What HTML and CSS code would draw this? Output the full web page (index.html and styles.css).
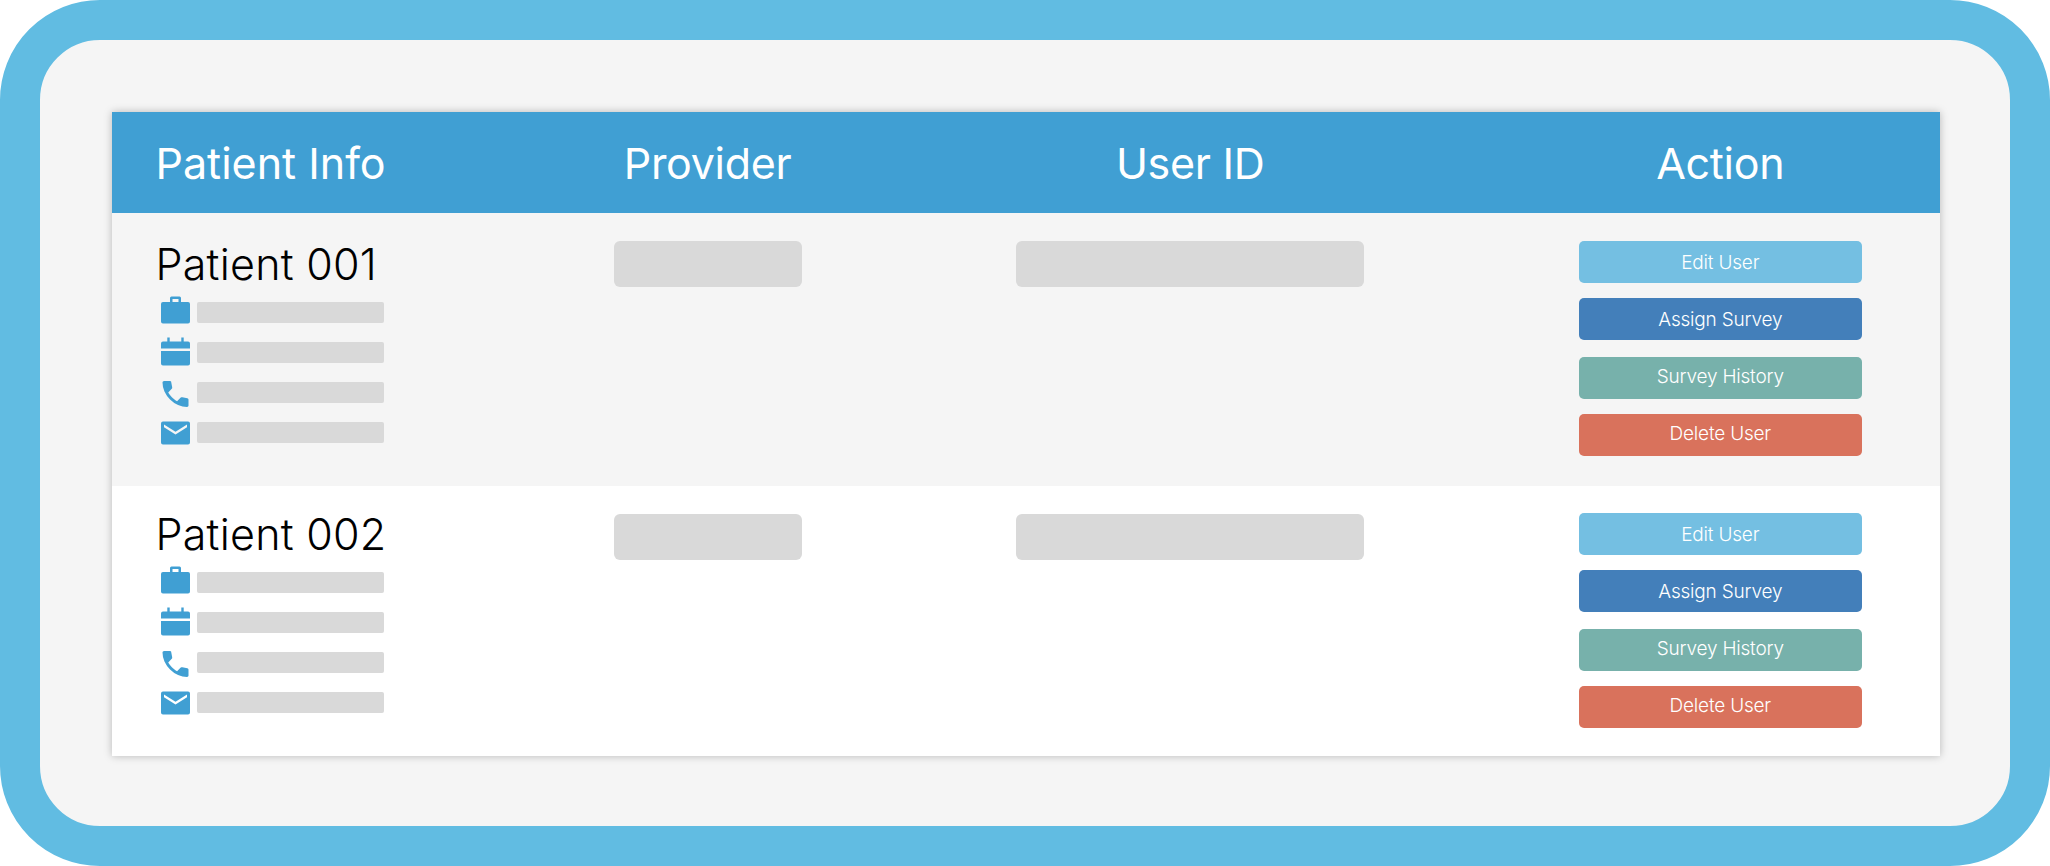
FILE: index.html
```html
<!DOCTYPE html>
<html lang="en">
<head>
  <meta charset="UTF-8">
  <title>Patients</title>
  <link rel="stylesheet" href="styles.css">
</head>
<body>

  <!-- shared icons -->
  <svg class="icon-defs" width="0" height="0">
    <symbol id="icon-work" viewBox="0 0 29 28">
      <path fill-rule="evenodd" d="M2 6H9V2Q9 .5 10.500 .5H18.500Q20 .5 20 2V6H27Q29 6 29 8V25.500Q29 27.500 27 27.500H2Q0 27.500 0 25.500V8Q0 6 2 6ZM11.500 3V6H17.500V3Z"/>
    </symbol>
    <symbol id="icon-calendar" viewBox="0 0 29 29">
      <path d="M2 4.500H6.300V.5H8.700V4.500H20.300V.5H22.700V4.500H27Q29 4.500 29 6.500V11.500H0V6.500Q0 4.500 2 4.500ZM0 14H29V26.500Q29 28.500 27 28.500H2Q0 28.500 0 26.500Z"/>
    </symbol>
    <symbol id="icon-phone" viewBox="3 3 18 18">
      <path d="M19.950 21q-3.125 0-6.175-1.363t-5.550-3.862-3.862-5.550T3 4.050q0-.45.3-.75t.75-.3H8.100q.35 0 .625.238t.325.562l.65 3.500q.05.4-.025.675T9.400 8.450L6.975 10.900q.5.925 1.188 1.787t1.512 1.663q.775.775 1.625 1.438T13.100 17l2.350-2.350q.225-.225.588-.338t.712-.062l3.450.7q.35.1.575.363T21 15.900v4.050q0 .45-.3.750t-.75.3Z"/>
    </symbol>
    <symbol id="icon-mail" viewBox="0 0 29 24">
      <path fill-rule="evenodd" d="M2 .5H27Q29 .5 29 2.500V21.500Q29 23.500 27 23.500H2Q0 23.500 0 21.500V2.500Q0 .5 2 .5ZM3 3.500V6.200L14.500 13.500L26 6.200V3.500L14.500 10.800Z"/>
    </symbol>
  </svg>

  <div class="frame">
    <div class="table">

      <div class="table-header">
        <div class="first">Patient Info</div>
        <div class="center">Provider</div>
        <div class="center">User ID</div>
        <div class="center">Action</div>
      </div>

      <div class="table-row">
        <div class="patient">
          <div class="patient-name">Patient 001</div>
          <ul class="details">
            <li><svg class="icon work"><use href="#icon-work"/></svg><span class="line"></span></li>
            <li><svg class="icon calendar"><use href="#icon-calendar"/></svg><span class="line"></span></li>
            <li><svg class="icon phone"><use href="#icon-phone"/></svg><span class="line"></span></li>
            <li><svg class="icon mail"><use href="#icon-mail"/></svg><span class="line"></span></li>
          </ul>
        </div>
        <div class="placeholder"></div>
        <div class="placeholder"></div>
        <div class="actions">
          <button class="edit">Edit User</button>
          <button class="assign">Assign Survey</button>
          <button class="history">Survey History</button>
          <button class="delete">Delete User</button>
        </div>
      </div>

      <div class="table-row second">
        <div class="patient">
          <div class="patient-name">Patient 002</div>
          <ul class="details">
            <li><svg class="icon work"><use href="#icon-work"/></svg><span class="line"></span></li>
            <li><svg class="icon calendar"><use href="#icon-calendar"/></svg><span class="line"></span></li>
            <li><svg class="icon phone"><use href="#icon-phone"/></svg><span class="line"></span></li>
            <li><svg class="icon mail"><use href="#icon-mail"/></svg><span class="line"></span></li>
          </ul>
        </div>
        <div class="placeholder"></div>
        <div class="placeholder"></div>
        <div class="actions">
          <button class="edit">Edit User</button>
          <button class="assign">Assign Survey</button>
          <button class="history">Survey History</button>
          <button class="delete">Delete User</button>
        </div>
      </div>

    </div>
  </div>

</body>
</html>
```
FILE: styles.css
```css
* {
  box-sizing: border-box;
}

body {
  margin: 0;
  background: #fff;
  font-family: Inter, "Liberation Sans", sans-serif;
}

.icon-defs {
  display: none;
}

.frame {
  height: 866px;
  padding: 72px 70px;
  border: 40px solid #61bce2;
  border-radius: 100px;
  background: #f5f5f5;
}

.table {
  width: 1828px;
  margin-left: 2px;
  height: 644px;
  background: #fff;
  box-shadow: 0 0 8px rgba(0, 0, 0, 0.25);
}

.table-header,
.table-row {
  display: grid;
  grid-template-columns: 245px 188px 348px 283px;
  column-gap: 214.6px;
  padding-left: 42px;
}

.table-header {
  height: 100.7px;
  background: #409fd3;
  color: #fff;
  font-size: 43px;
  font-weight: 400;
  line-height: 103px;
  white-space: nowrap;
}

.first {
  padding-left: 1.5px;
}

.center {
  text-align: center;
  letter-spacing: -0.3px;
}

.table-row {
  height: 273.3px;
  padding-top: 28px;
  background: #f5f5f5;
  align-items: start;
}

.table-row.second {
  height: 270px;
  padding-top: 27px;
  background: #fff;
}

.patient-name {
  height: 61.2px;
  padding-left: 1.5px;
  color: #000;
  font-size: 43px;
  font-weight: 300;
  letter-spacing: 0.25px;
  line-height: 46px;
  white-space: nowrap;
}

.second .patient-name {
  height: 59px;
  line-height: 42px;
}

.details {
  margin: 0;
  padding: 0 0 0 7px;
  list-style: none;
}

.details li {
  display: flex;
  height: 39.9px;
  gap: 7.3px;
}

.icon {
  width: 29px;
  fill: #409fd3;
}

.work {
  height: 28px;
  margin-top: -6px;
}

.calendar {
  height: 29px;
  margin-top: -4.5px;
}

.phone {
  height: 26px;
  margin-top: -1px;
}

.mail {
  height: 24px;
  margin-top: -1px;
}

.line {
  width: 186.5px;
  height: 21px;
  border-radius: 2px;
  background: #d9d9d9;
}

.placeholder {
  height: 46px;
  border-radius: 6px;
  background: #d9d9d9;
}

.second .placeholder {
  margin-top: 1.5px;
}

.actions {
  display: flex;
  flex-direction: column;
}

button {
  height: 42px;
  margin: 0 0 15px;
  padding: 0;
  border: none;
  border-radius: 5px;
  color: #fff;
  font-family: inherit;
  font-size: 19px;
  font-weight: 300;
  letter-spacing: -0.2px;
  line-height: 42px;
}

.edit {
  background: #74bfe2;
}

.assign {
  margin-bottom: 17px;
  background: #437fba;
}

.history {
  background: #77b1ab;
}

.delete {
  background: #d9725c;
}

.edit,
.assign {
  padding-top: 1px;
}

.history,
.delete {
  padding-bottom: 3px;
  line-height: 39px;
}
```
